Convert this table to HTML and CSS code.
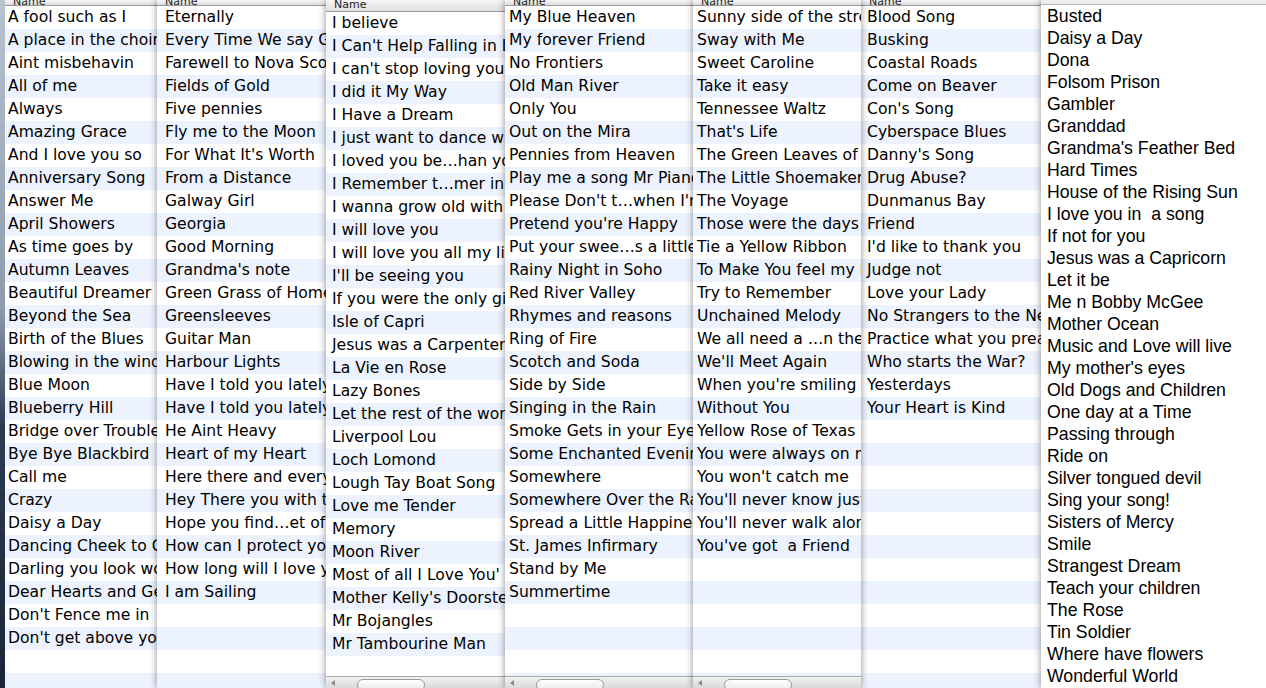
FILE: index.html
```html
<!DOCTYPE html>
<html>
<head>
<meta charset="utf-8">
<link rel="stylesheet" href="styles.css">
</head>
<body>
<div class="desk">
  <div class="strip"></div>

  <div class="win w1">
    <div class="head short"><span>Name</span></div>
    <div class="list">
      <div class="row">A fool such as I</div>
      <div class="row">A place in the choir</div>
      <div class="row">Aint misbehavin</div>
      <div class="row">All of me</div>
      <div class="row">Always</div>
      <div class="row">Amazing Grace</div>
      <div class="row">And I love you so</div>
      <div class="row">Anniversary Song</div>
      <div class="row">Answer Me</div>
      <div class="row">April Showers</div>
      <div class="row">As time goes by</div>
      <div class="row">Autumn Leaves</div>
      <div class="row">Beautiful Dreamer</div>
      <div class="row">Beyond the Sea</div>
      <div class="row">Birth of the Blues</div>
      <div class="row">Blowing in the wind</div>
      <div class="row">Blue Moon</div>
      <div class="row">Blueberry Hill</div>
      <div class="row">Bridge over Troubled Water</div>
      <div class="row">Bye Bye Blackbird</div>
      <div class="row">Call me</div>
      <div class="row">Crazy</div>
      <div class="row">Daisy a Day</div>
      <div class="row">Dancing Cheek to Cheek</div>
      <div class="row">Darling you look wonderful</div>
      <div class="row">Dear Hearts and Gentle People</div>
      <div class="row">Don't Fence me in</div>
      <div class="row">Don't get above your raising</div>
    </div>
  </div>

  <div class="win w2">
    <div class="head short"><span>Name</span></div>
    <div class="list">
      <div class="row">Eternally</div>
      <div class="row">Every Time We say Goodbye</div>
      <div class="row">Farewell to Nova Scotia</div>
      <div class="row">Fields of Gold</div>
      <div class="row">Five pennies</div>
      <div class="row">Fly me to the Moon</div>
      <div class="row">For What It's Worth</div>
      <div class="row">From a Distance</div>
      <div class="row">Galway Girl</div>
      <div class="row">Georgia</div>
      <div class="row">Good Morning</div>
      <div class="row">Grandma's note</div>
      <div class="row">Green Grass of Home</div>
      <div class="row">Greensleeves</div>
      <div class="row">Guitar Man</div>
      <div class="row">Harbour Lights</div>
      <div class="row">Have I told you lately</div>
      <div class="row">Have I told you lately</div>
      <div class="row">He Aint Heavy</div>
      <div class="row">Heart of my Heart</div>
      <div class="row">Here there and everywhere</div>
      <div class="row">Hey There you with the stars</div>
      <div class="row">Hope you find…et of love</div>
      <div class="row">How can I protect you</div>
      <div class="row">How long will I love you</div>
      <div class="row">I am Sailing</div>
    </div>
  </div>

  <div class="win w3">
    <div class="head tall"><span>Name</span></div>
    <div class="list">
      <div class="row">I believe</div>
      <div class="row">I Can't Help Falling in Love</div>
      <div class="row">I can't stop loving you</div>
      <div class="row">I did it My Way</div>
      <div class="row">I Have a Dream</div>
      <div class="row">I just want to dance with you</div>
      <div class="row">I loved you be…han you know</div>
      <div class="row">I Remember t…mer in Dublin</div>
      <div class="row">I wanna grow old with you</div>
      <div class="row">I will love you</div>
      <div class="row">I will love you all my life</div>
      <div class="row">I'll be seeing you</div>
      <div class="row">If you were the only girl</div>
      <div class="row">Isle of Capri</div>
      <div class="row">Jesus was a Carpenter</div>
      <div class="row">La Vie en Rose</div>
      <div class="row">Lazy Bones</div>
      <div class="row">Let the rest of the world go by</div>
      <div class="row">Liverpool Lou</div>
      <div class="row">Loch Lomond</div>
      <div class="row">Lough Tay Boat Song</div>
      <div class="row">Love me Tender</div>
      <div class="row">Memory</div>
      <div class="row">Moon River</div>
      <div class="row">Most of all I Love You'</div>
      <div class="row">Mother Kelly's Doorstep</div>
      <div class="row">Mr Bojangles</div>
      <div class="row">Mr Tambourine Man</div>
    </div>
    <div class="scroll"><span class="arrow"></span><span class="thumb"></span></div>
  </div>

  <div class="win w4">
    <div class="head short"><span>Name</span></div>
    <div class="list">
      <div class="row">My Blue Heaven</div>
      <div class="row">My forever Friend</div>
      <div class="row">No Frontiers</div>
      <div class="row">Old Man River</div>
      <div class="row">Only You</div>
      <div class="row">Out on the Mira</div>
      <div class="row">Pennies from Heaven</div>
      <div class="row">Play me a song Mr Piano Man</div>
      <div class="row">Please Don't t…when I'm gone</div>
      <div class="row">Pretend you're Happy</div>
      <div class="row">Put your swee…s a little closer</div>
      <div class="row">Rainy Night in Soho</div>
      <div class="row">Red River Valley</div>
      <div class="row">Rhymes and reasons</div>
      <div class="row">Ring of Fire</div>
      <div class="row">Scotch and Soda</div>
      <div class="row">Side by Side</div>
      <div class="row">Singing in the Rain</div>
      <div class="row">Smoke Gets in your Eyes</div>
      <div class="row">Some Enchanted Evening</div>
      <div class="row">Somewhere</div>
      <div class="row">Somewhere Over the Rainbow</div>
      <div class="row">Spread a Little Happiness</div>
      <div class="row">St. James Infirmary</div>
      <div class="row">Stand by Me</div>
      <div class="row">Summertime</div>
    </div>
    <div class="scroll"><span class="arrow"></span><span class="thumb"></span></div>
  </div>

  <div class="win w5">
    <div class="head short"><span>Name</span></div>
    <div class="list">
      <div class="row">Sunny side of the street</div>
      <div class="row">Sway with Me</div>
      <div class="row">Sweet Caroline</div>
      <div class="row">Take it easy</div>
      <div class="row">Tennessee Waltz</div>
      <div class="row">That's Life</div>
      <div class="row">The Green Leaves of Summer</div>
      <div class="row">The Little Shoemaker</div>
      <div class="row">The Voyage</div>
      <div class="row">Those were the days</div>
      <div class="row">Tie a Yellow Ribbon</div>
      <div class="row">To Make You feel my Love</div>
      <div class="row">Try to Remember</div>
      <div class="row">Unchained Melody</div>
      <div class="row">We all need a …n the world</div>
      <div class="row">We'll Meet Again</div>
      <div class="row">When you're smiling</div>
      <div class="row">Without You</div>
      <div class="row">Yellow Rose of Texas</div>
      <div class="row">You were always on my mind</div>
      <div class="row">You won't catch me</div>
      <div class="row">You'll never know just how much</div>
      <div class="row">You'll never walk alone</div>
      <div class="row">You've got&nbsp; a Friend</div>
    </div>
    <div class="scroll"><span class="arrow"></span><span class="thumb"></span></div>
  </div>

  <div class="win w6">
    <div class="head short"><span>Name</span></div>
    <div class="list">
      <div class="row">Blood Song</div>
      <div class="row">Busking</div>
      <div class="row">Coastal Roads</div>
      <div class="row">Come on Beaver</div>
      <div class="row">Con's Song</div>
      <div class="row">Cyberspace Blues</div>
      <div class="row">Danny's Song</div>
      <div class="row">Drug Abuse?</div>
      <div class="row">Dunmanus Bay</div>
      <div class="row">Friend</div>
      <div class="row">I'd like to thank you</div>
      <div class="row">Judge not</div>
      <div class="row">Love your Lady</div>
      <div class="row">No Strangers to the Needle</div>
      <div class="row">Practice what you preach</div>
      <div class="row">Who starts the War?</div>
      <div class="row">Yesterdays</div>
      <div class="row">Your Heart is Kind</div>
    </div>
  </div>

  <div class="win w7">
    <div class="head thin"></div>
    <div class="list plain">
      <div class="row">Busted</div>
      <div class="row">Daisy a Day</div>
      <div class="row">Dona</div>
      <div class="row">Folsom Prison</div>
      <div class="row">Gambler</div>
      <div class="row">Granddad</div>
      <div class="row">Grandma's Feather Bed</div>
      <div class="row">Hard Times</div>
      <div class="row">House of the Rising Sun</div>
      <div class="row">I love you in&nbsp; a song</div>
      <div class="row">If not for you</div>
      <div class="row">Jesus was a Capricorn</div>
      <div class="row">Let it be</div>
      <div class="row">Me n Bobby McGee</div>
      <div class="row">Mother Ocean</div>
      <div class="row">Music and Love will live</div>
      <div class="row">My mother's eyes</div>
      <div class="row">Old Dogs and Children</div>
      <div class="row">One day at a Time</div>
      <div class="row">Passing through</div>
      <div class="row">Ride on</div>
      <div class="row">Silver tongued devil</div>
      <div class="row">Sing your song!</div>
      <div class="row">Sisters of Mercy</div>
      <div class="row">Smile</div>
      <div class="row">Strangest Dream</div>
      <div class="row">Teach your children</div>
      <div class="row">The Rose</div>
      <div class="row">Tin Soldier</div>
      <div class="row">Where have flowers</div>
      <div class="row">Wonderful World</div>
    </div>
  </div>
</div>
</body>
</html>
```

FILE: styles.css
```css
html, body {
  margin: 0;
  padding: 0;
  width: 1266px;
  height: 688px;
  overflow: hidden;
  background: #1d2a3d;
}

.desk {
  display: flex;
  width: 1266px;
  height: 688px;
  overflow: hidden;
}

.strip {
  width: 5px;
  flex: none;
  background: linear-gradient(#b9c3cf 0%, #8c9aac 45%, #2b3b52 62%, #1b2638 100%);
}

.win {
  flex: none;
  height: 688px;
  display: flex;
  flex-direction: column;
  background: #fff;
  overflow: hidden;
  position: relative;
  box-shadow: 0 0 7px rgba(0, 0, 0, 0.45);
  font-family: "DejaVu Sans", Verdana, sans-serif;
  font-size: 15.6px;
  color: #000;
}

.w1 { width: 152px; z-index: 1; box-shadow: none; }
.w2 { width: 169px; z-index: 2; }
.w3 { width: 179px; z-index: 3; }
.w4 { width: 188px; z-index: 4; }
.w5 { width: 168px; z-index: 6; }
.w6 { width: 180px; z-index: 5; }
.w7 { width: 225px; z-index: 7; }

.w1 .row { padding-left: 3px; }
.w2 .row { padding-left: 8px; }
.w3 .row { padding-left: 6px; }
.w4 .row { padding-left: 4px; }
.w5 .row { padding-left: 4px; }
.w6 .row { padding-left: 6px; }
.w7 .row { padding-left: 6px; }

.head {
  flex: none;
  overflow: hidden;
  background: linear-gradient(#f6f6f6, #dedede);
  border-bottom: 1px solid #9a9a9a;
  font-size: 11px;
  color: #222;
  display: flex;
  align-items: flex-end;
  padding-left: 8px;
}
.head span {
  display: block;
  line-height: 12px;
}
.head.short { height: 5px; }
.head.short span { margin-bottom: -3px; }
.head.tall { height: 11px; }
.head.tall span { margin-bottom: 0px; }
.head.thin { height: 4px; background: #ececec; border-bottom: 1px solid #b5b5b5; }

.list {
  flex: 1;
  min-height: 0;
  overflow: hidden;
  background: repeating-linear-gradient(#ffffff 0px, #ffffff 23px, #edf3fe 23px, #edf3fe 46px);
}
.list.plain {
  background: #fff;
  font-family: "Liberation Sans", Arial, sans-serif;
  font-size: 17.7px;
}

.row {
  height: 23px;
  line-height: 23px;
  white-space: nowrap;
  overflow: hidden;
}
.plain .row {
  height: 22px;
  line-height: 22px;
}

.scroll {
  flex: none;
  height: 11px;
  border-top: 1px solid #a8a8a8;
  background: linear-gradient(#f2f2f2, #d9d9d9);
  display: flex;
  align-items: flex-start;
  padding-left: 5px;
  gap: 22px;
}
.arrow {
  width: 0;
  height: 0;
  margin-top: 3px;
  border-top: 3px solid transparent;
  border-bottom: 3px solid transparent;
  border-right: 4px solid #8a8a8a;
}
.thumb {
  width: 68px;
  height: 12px;
  margin-top: 2px;
  border: 1px solid #9c9c9c;
  border-radius: 7px;
  background: linear-gradient(#ffffff, #e8e8e8);
  box-sizing: border-box;
}
```
